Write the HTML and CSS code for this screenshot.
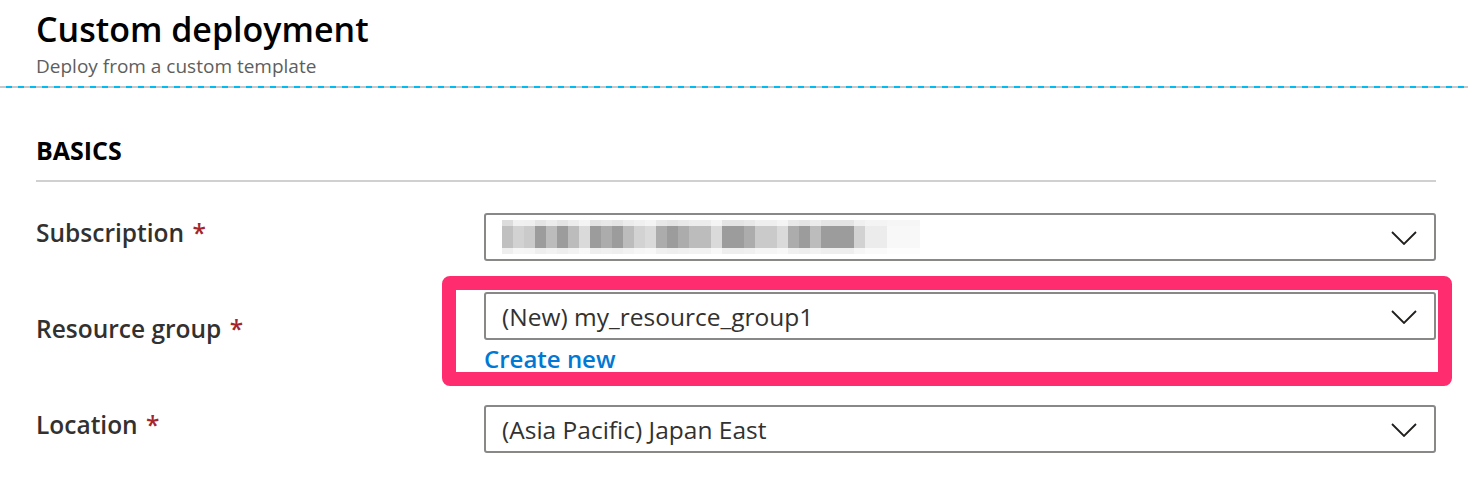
FILE: index.html
```html
<!DOCTYPE html>
<html lang="en">
<head>
<meta charset="utf-8">
<title>Custom deployment</title>
<link rel="stylesheet" href="styles.css">
</head>
<body>
<div class="page">
  <header class="header">
    <h1 class="title">Custom deployment</h1>
    <div class="subtitle">Deploy from a custom template</div>
  </header>
  <div class="divider-dashed"></div>
  <main class="content">
    <h2 class="section">BASICS</h2>
    <div class="section-rule"></div>
    <div class="form">
      <div class="row">
        <div class="label">Subscription <span class="req">*</span></div>
        <div class="field">
          <div class="select">
            <div class="mosaic">
              <span class="c l2"></span><span class="c l3"></span><span class="c m4"></span><span class="c m1"></span><span class="c m3"></span><span class="c m1"></span><span class="c m3"></span><span class="c l4"></span><span class="c m1"></span><span class="c m2"></span><span class="c m1"></span><span class="c m3"></span><span class="c l3"></span><span class="c l4"></span><span class="c m2"></span><span class="c m1"></span><span class="c m2"></span><span class="c m3"></span><span class="c m3"></span><span class="c l4"></span><span class="c m1"></span><span class="c m1"></span><span class="c m2"></span><span class="c m4"></span><span class="c m4"></span><span class="c l4"></span><span class="c m2"></span><span class="c m1"></span><span class="c m3"></span><span class="c m1"></span><span class="c m1"></span><span class="c m1"></span><span class="c l3"></span><span class="c l5"></span><span class="c l5"></span><span class="c l6"></span><span class="c l6"></span><span class="c l6"></span>
            </div>
            <svg class="chev" width="26" height="14" viewBox="0 0 26 14"><path d="M1 1 L13 13 L25 1" fill="none" stroke="#201f1e" stroke-width="1.8"/></svg>
          </div>
        </div>
      </div>
      <div class="row">
        <div class="label">Resource group <span class="req">*</span></div>
        <div class="field">
          <div class="select">
            <span class="value">(New) my_resource_group1</span>
            <svg class="chev" width="26" height="14" viewBox="0 0 26 14"><path d="M1 1 L13 13 L25 1" fill="none" stroke="#201f1e" stroke-width="1.8"/></svg>
          </div>
          <a class="link" href="#">Create new</a>
          <div class="highlight"></div>
        </div>
      </div>
      <div class="row">
        <div class="label">Location <span class="req">*</span></div>
        <div class="field">
          <div class="select">
            <span class="value">(Asia Pacific) Japan East</span>
            <svg class="chev" width="26" height="14" viewBox="0 0 26 14"><path d="M1 1 L13 13 L25 1" fill="none" stroke="#201f1e" stroke-width="1.8"/></svg>
          </div>
        </div>
      </div>
    </div>
  </main>
</div>
</body>
</html>
```

FILE: styles.css
```css
* { box-sizing: border-box; }
html, body { margin: 0; padding: 0; background: #fff; }
body {
  font-family: "Segoe UI", "Open Sans", "Noto Sans", sans-serif;
  color: #323130;
  width: 1468px;
  height: 504px;
  overflow: hidden;
}
.header { padding: 7px 0 0 36px; height: 86px; }
.title {
  margin: 0;
  font-size: 34px;
  font-weight: 600;
  color: #000;
  line-height: 44px;
}
.subtitle {
  font-size: 19px;
  color: #605e5c;
  line-height: 26px;
  margin-top: 1.5px;
}
.divider-dashed {
  height: 2px;
  background: repeating-linear-gradient(90deg, #c8c8c8 0 6px, #00bcf2 6px 12px);
}
.content { padding: 0 32px 0 36px; }
.section {
  margin: 0;
  padding-top: 47px;
  font-size: 25px;
  font-weight: 700;
  color: #000;
  line-height: 30px;
}
.section-rule {
  margin-top: 15px;
  height: 2px;
  background: #d0d0d0;
}
.form { display: flex; flex-direction: column; padding-top: 31px; gap: 31px; }
.row { display: flex; align-items: center; }
.row:last-child { margin-top: 1px; }
.label {
  width: 448px;
  flex: none;
  font-size: 24.5px;
  font-weight: 600;
  color: #323130;
  line-height: 30px;
  padding-bottom: 8px;
}
.req { color: #a4262c; margin-left: 2px; }
.field { width: 952px; position: relative; display: flex; flex-direction: column; }
.select {
  height: 48px;
  border: 2px solid #8a8886;
  border-radius: 3px;
  display: flex;
  align-items: center;
  justify-content: space-between;
  padding: 0 17px 0 16px;
}
.value { font-size: 24.5px; color: #323130; line-height: 30px; margin-top: 2px; }
.chev { display: block; margin-top: 1px; }
.link {
  color: #0078d4;
  font-weight: 600;
  font-size: 24px;
  line-height: 28px;
  text-decoration: none;
  margin-top: 5px;
  align-self: flex-start;
}
.mosaic { display: flex; height: 34px; }
.c { width: 11px; height: 34px; }
.m1 { background: linear-gradient(#e4e4e4 0 6px, #9c9c9c 6px 28px, #eeeeee 28px); }
.m2 { background: linear-gradient(#e8e8e8 0 6px, #acacac 6px 28px, #f0f0f0 28px); }
.m3 { background: linear-gradient(#ececec 0 6px, #bcbcbc 6px 28px, #f2f2f2 28px); }
.m4 { background: linear-gradient(#efefef 0 6px, #cacaca 6px 28px, #f5f5f5 28px); }
.l2 { background: linear-gradient(#dcdcdc 0 6px, #c0c0c0 6px 28px, #eeeeee 28px); }
.l3 { background: linear-gradient(#f0f0f0 0 6px, #d2d2d2 6px 28px, #f6f6f6 28px); }
.l4 { background: linear-gradient(#f4f4f4 0 6px, #dadada 6px 28px, #f8f8f8 28px); }
.l5 { background: linear-gradient(#f4f4f4 0 6px, #ececec 6px 28px, #fafafa 28px); }
.l6 { background: linear-gradient(#f6f6f6 0 6px, #f8f8f8 6px 28px, #fdfdfd 28px); }
.highlight {
  position: absolute;
  left: -42px;
  top: -16px;
  width: 1010px;
  height: 110px;
  border: 14px solid #ff2d6f;
  border-radius: 8px;
  pointer-events: none;
}
```
